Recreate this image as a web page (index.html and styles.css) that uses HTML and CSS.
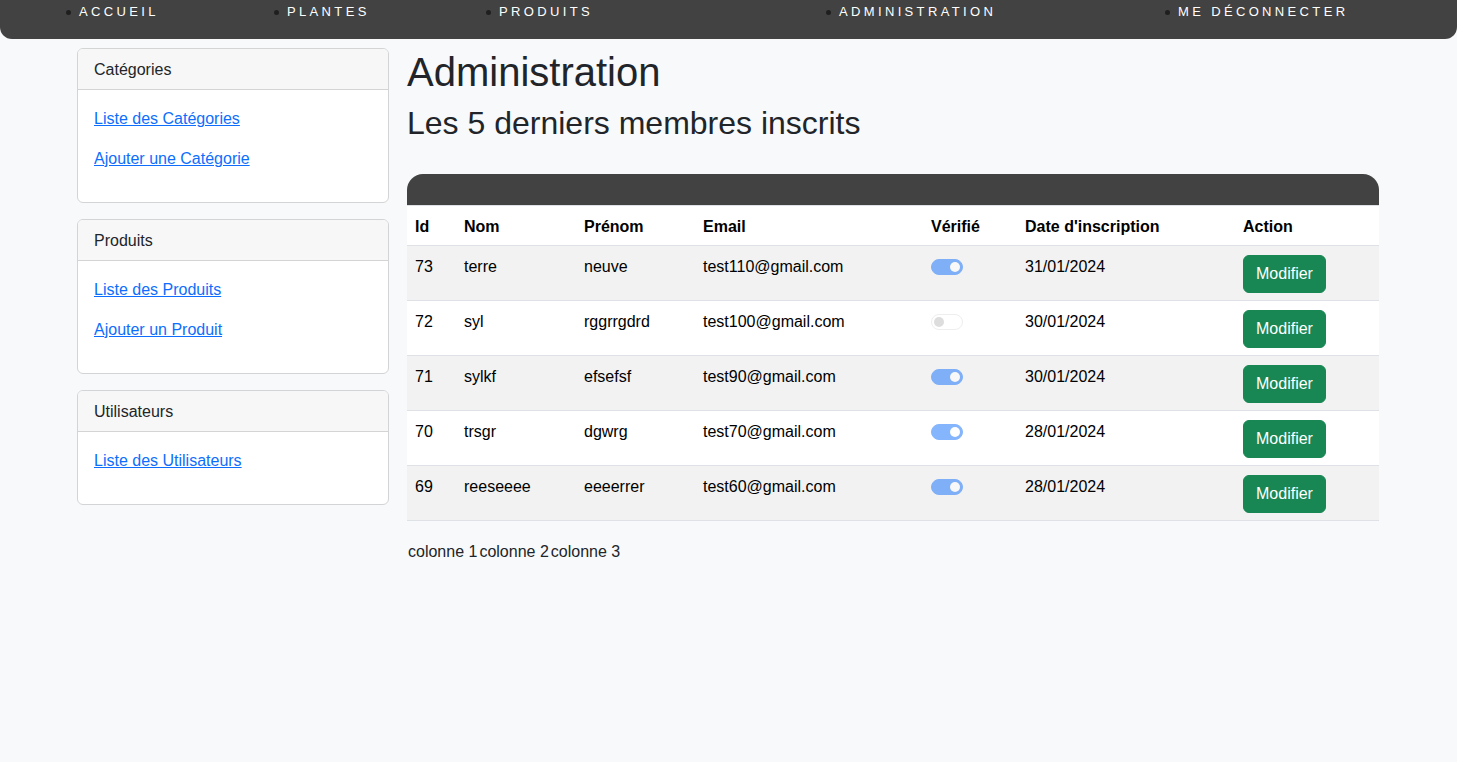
FILE: index.html
```html
<!DOCTYPE html>
<html lang="fr">
<head>
<meta charset="utf-8">
<title>Administration</title>
<link rel="stylesheet" href="styles.css">
</head>
<body>
<nav class="topnav">
  <ul class="topnav-list">
    <li><a href="#">Accueil</a></li>
    <li><a href="#">Plantes</a></li>
    <li><a href="#">Produits</a></li>
    <li><a href="#">Administration</a></li>
    <li><a href="#">Me déconnecter</a></li>
  </ul>
</nav>
<div class="page">
  <aside class="sidebar">
    <div class="card">
      <div class="card-header">Catégories</div>
      <div class="card-body">
        <p><a href="#">Liste des Catégories</a></p>
        <p><a href="#">Ajouter une Catégorie</a></p>
      </div>
    </div>
    <div class="card">
      <div class="card-header">Produits</div>
      <div class="card-body">
        <p><a href="#">Liste des Produits</a></p>
        <p><a href="#">Ajouter un Produit</a></p>
      </div>
    </div>
    <div class="card">
      <div class="card-header">Utilisateurs</div>
      <div class="card-body">
        <p><a href="#">Liste des Utilisateurs</a></p>
      </div>
    </div>
  </aside>
  <main class="main">
    <h1 class="title">Administration</h1>
    <h2 class="subtitle">Les 5 derniers membres inscrits</h2>
    <table class="members">
      <colgroup>
        <col class="c-id"><col class="c-nom"><col class="c-prenom"><col class="c-email"><col class="c-verif"><col class="c-date"><col class="c-action">
      </colgroup>
      <thead>
        <tr class="bar"><th colspan="7"></th></tr>
        <tr class="head">
          <th>Id</th><th>Nom</th><th>Prénom</th><th>Email</th><th>Vérifié</th><th>Date d'inscription</th><th>Action</th>
        </tr>
      </thead>
      <tbody>
        <tr class="odd">
          <td>73</td><td>terre</td><td>neuve</td><td>test110@gmail.com</td>
          <td><span class="switch on"></span></td><td>31/01/2024</td>
          <td><button class="btn">Modifier</button></td>
        </tr>
        <tr>
          <td>72</td><td>syl</td><td>rggrrgdrd</td><td>test100@gmail.com</td>
          <td><span class="switch"></span></td><td>30/01/2024</td>
          <td><button class="btn">Modifier</button></td>
        </tr>
        <tr class="odd">
          <td>71</td><td>sylkf</td><td>efsefsf</td><td>test90@gmail.com</td>
          <td><span class="switch on"></span></td><td>30/01/2024</td>
          <td><button class="btn">Modifier</button></td>
        </tr>
        <tr>
          <td>70</td><td>trsgr</td><td>dgwrg</td><td>test70@gmail.com</td>
          <td><span class="switch on"></span></td><td>28/01/2024</td>
          <td><button class="btn">Modifier</button></td>
        </tr>
        <tr class="odd">
          <td>69</td><td>reeseeee</td><td>eeeerrer</td><td>test60@gmail.com</td>
          <td><span class="switch on"></span></td><td>28/01/2024</td>
          <td><button class="btn">Modifier</button></td>
        </tr>
      </tbody>
    </table>
    <div class="cols">
      <span>colonne 1</span><span>colonne 2</span><span>colonne 3</span>
    </div>
  </main>
</div>
</body>
</html>
```
FILE: styles.css
```css
* { box-sizing: border-box; }
html, body {
  margin: 0;
  background: #f8f9fa;
  color: #212529;
  font-family: "Liberation Sans", Arial, sans-serif;
  font-size: 16px;
  line-height: 24px;
}
.topnav {
  background: #424242;
  height: 39px;
  border-radius: 0 0 12px 12px;
}
.topnav-list {
  margin: 0;
  padding: 1px 0 0 66px;
  display: grid;
  grid-template-columns: 208px 212px 340px 339px auto;
  list-style: none;
}
.topnav-list li {
  font-size: 13px;
  line-height: 22px;
  display: flex;
  align-items: center;
}
.topnav-list li::before {
  content: "";
  width: 5px;
  height: 5px;
  border-radius: 50%;
  background: #1f1f1f;
  margin-right: 8px;
  flex: none;
}
.topnav-list a {
  color: #ffffff;
  text-decoration: none;
  text-transform: uppercase;
  letter-spacing: 3.35px;
}
.page {
  display: grid;
  grid-template-columns: 312px 972px;
  column-gap: 18px;
  padding: 9px 0 0 77px;
  align-items: start;
}
.sidebar {
  display: flex;
  flex-direction: column;
  gap: 16px;
}
.card {
  background: #fff;
  border: 1px solid #d3d4d5;
  border-radius: 6px;
  overflow: hidden;
}
.card-header {
  background: #f7f7f7;
  border-bottom: 1px solid #d3d4d5;
  padding: 9px 16px 7px;
}
.card-body {
  padding: 17px 16px 15px;
}
.card-body p {
  margin: 0 0 16px;
}
.card-body a {
  color: #0d6efd;
  text-decoration: underline;
}
.main { min-width: 0; }
.title {
  margin: 0 0 8px;
  font-size: 40px;
  line-height: 48px;
  font-weight: 500;
}
.subtitle {
  margin: 0 0 32px;
  font-size: 32px;
  line-height: 38px;
  font-weight: 500;
}
.members {
  width: 972px;
  border-collapse: separate;
  border-spacing: 0;
  table-layout: fixed;
  margin-bottom: 16px;
  color: #000;
}
.c-id { width: 49px; }
.c-nom { width: 120px; }
.c-prenom { width: 119px; }
.c-email { width: 228px; }
.c-verif { width: 94px; }
.c-date { width: 218px; }
.c-action { width: 144px; }
.bar th {
  background: #424242;
  height: 32px;
  padding: 0;
  border-radius: 16px 16px 0 0;
}
.members th, .members td {
  text-align: left;
  vertical-align: top;
  padding: 9px 8px 7px;
  border-bottom: 1px solid #dee2e6;
}
.head th {
  background: #fff;
  font-weight: 700;
  padding: 9px 8px 6px;
}
.members td { background: #fff; }
.members tr.odd td { background: #f2f2f2; }
.switch {
  display: block;
  position: relative;
  width: 32px;
  height: 16px;
  margin-top: 4px;
  border-radius: 8px;
  background: #fff;
  border: 1px solid #dedede;
  opacity: 0.5;
}
.switch::after {
  content: "";
  position: absolute;
  left: 2px;
  top: 2px;
  width: 10px;
  height: 10px;
  border-radius: 50%;
  background: #bdbdbd;
}
.switch.on {
  background: #0d6efd;
  border-color: #0d6efd;
}
.switch.on::after {
  left: auto;
  right: 2px;
  background: #fff;
}
.btn {
  font-family: inherit;
  font-size: 16px;
  line-height: 24px;
  color: #fff;
  background: #198754;
  border: 1px solid #198754;
  border-radius: 6px;
  padding: 6px 12px;
  display: block;
}
.cols {
  display: flex;
  gap: 2px;
  padding: 3px 0 0 1px;
  color: #212529;
}
```
